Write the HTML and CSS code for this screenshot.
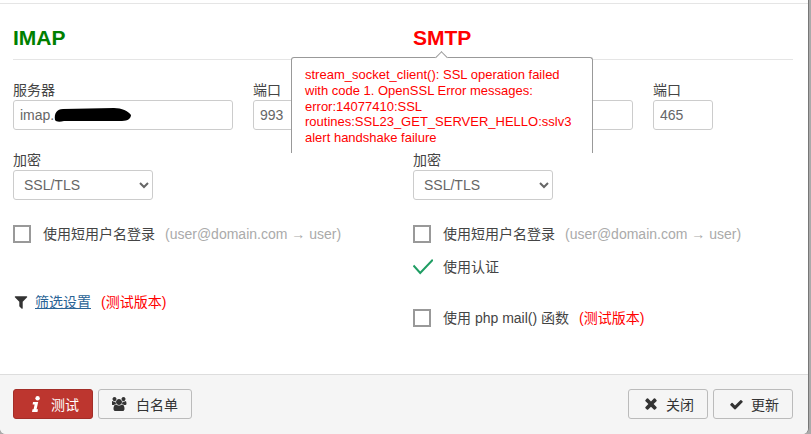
FILE: index.html
```html
<!DOCTYPE html>
<html lang="zh">
<head>
    <meta charset="UTF-8">
    <meta name="viewport" content="width=device-width, initial-scale=1.0">
    <title>邮件设置</title>
    <link rel="stylesheet" href="styles.css">
</head>
<body>
    <div class="modal">
        <div class="modal-body">
            <section class="col">
                <h2 class="legend legend-imap">IMAP</h2>
                <div class="field-row">
                    <div class="field">
                        <label>服务器</label>
                        <div class="redacted">
                            <input class="input-host" type="text" value="imap.">
                            <svg class="scribble" viewBox="0 0 77 14"><path d="M1 12 C0 5 3 1 9 1 L60 0 C68 0 74 3 77 7 C77 10 74 13 68 13 L10 13 C6 14 2 14 1 12 Z"/></svg>
                        </div>
                    </div>
                    <div class="field">
                        <label>端口</label>
                        <input class="input-port" type="text" value="993">
                    </div>
                </div>
                <div class="field">
                    <label>加密</label>
                    <select class="select-enc"><option>SSL/TLS</option></select>
                </div>
                <div class="check-row first-check">
                    <span class="checkbox"></span>
                    <span>使用短用户名登录</span>
                    <span class="hint">(user@domain.com → user)</span>
                </div>
                <div class="filter-row">
                    <svg class="icon-filter" viewBox="0 0 1408 1792"><path d="M1403 295q17 41-14 70l-493 493v742q0 42-39 59-13 5-25 5-27 0-45-19l-256-256q-19-19-19-45v-486l-493-493q-31-29-14-70 17-39 59-39h1280q42 0 59 39z"/></svg>
                    <a href="#">筛选设置</a>
                    <span class="beta">(测试版本)</span>
                </div>
            </section>

            <section class="col">
                <h2 class="legend legend-smtp">SMTP</h2>
                <div class="field-row">
                    <div class="field">
                        <label>&nbsp;</label>
                        <input class="input-host" type="text">
                    </div>
                    <div class="field">
                        <label>端口</label>
                        <input class="input-port" type="text" value="465">
                    </div>
                </div>
                <div class="field">
                    <label>加密</label>
                    <select class="select-enc"><option>SSL/TLS</option></select>
                </div>
                <div class="check-row first-check">
                    <span class="checkbox"></span>
                    <span>使用短用户名登录</span>
                    <span class="hint">(user@domain.com → user)</span>
                </div>
                <div class="check-row auth-row">
                    <svg class="icon-ok" viewBox="0 0 20 16"><path d="M0.5 6.5 L7.2 14 L19.8 0.8"/></svg>
                    <span>使用认证</span>
                </div>
                <div class="check-row mail-row">
                    <span class="checkbox"></span>
                    <span>使用 php mail() 函数</span>
                    <span class="beta">(测试版本)</span>
                </div>
            </section>
        </div>

        <div class="popover">
            <div class="popover-arrow"></div>
            <div class="popover-text">stream_socket_client(): SSL operation failed with code 1. OpenSSL Error messages: error:14077410:SSL routines:SSL23_GET_SERVER_HELLO:sslv3 alert handshake failure</div>
        </div>

        <div class="modal-footer">
            <button class="btn btn-test">
                <svg class="icon-info" viewBox="0 0 8 16"><circle cx="5.6" cy="2.2" r="2.2"/><path d="M1 6 H6.2 L4.6 13.2 H6 L5.5 16 H0 L0.5 13.2 H1.6 L2.6 8.4 H0.6 Z"/></svg>
                测试
            </button>
            <button class="btn btn-white">
                <svg class="icon-users" viewBox="0 0 1920 1792"><path d="M529 896q-162 5-265 128h-134q-82 0-138-40.5t-56-118.5q0-353 124-353 6 0 43.5 21t97.5 42.5 119 21.5q67 0 133-23-5 37-5 66 0 139 81 256zm1071 637q0 120-73 189.5t-194 69.5h-874q-121 0-194-69.5t-73-189.5q0-53 3.5-103.5t14-109 26.5-108.5 43-97.5 62-81 85.5-53.5 111.5-20q10 0 43 21.5t73 48 107 48 135 21.5 135-21.5 107-48 73-48 43-21.5q61 0 111.5 20t85.5 53.5 62 81 43 97.5 26.5 108.5 14 109 3.5 103.5zm-1024-1277q0 106-75 181t-181 75-181-75-75-181 75-181 181-75 181 75 75 181zm704 384q0 159-112.5 271.5t-271.5 112.5-271.5-112.5-112.5-271.5 112.5-271.5 271.5-112.5 271.5 112.5 112.5 271.5zm576 225q0 78-56 118.5t-138 40.5h-134q-103-123-265-128 81-117 81-256 0-29-5-66 66 23 133 23 59 0 119-21.5t97.5-42.5 43.5-21q124 0 124 353zm-128-609q0 106-75 181t-181 75-181-75-75-181 75-181 181-75 181 75 75 181z"/></svg>
                白名单
            </button>
            <button class="btn btn-close">
                <svg class="icon-times" viewBox="100 330 1210 1240"><path d="M1298 1322q0 40-28 68l-136 136q-28 28-68 28t-68-28l-294-294-294 294q-28 28-68 28t-68-28l-136-136q-28-28-28-68t28-68l294-294-294-294q-28-28-28-68t28-68l136-136q28-28 68-28t68 28l294 294 294-294q28-28 68-28t68 28l136 136q28 28 28 68t-28 68l-294 294 294 294q28 28 28 68z"/></svg>
                关闭
            </button>
            <button class="btn btn-update">
                <svg class="icon-check" viewBox="100 300 1600 1200"><path d="M1671 566q0 40-28 68l-724 724-136 136q-28 28-68 28t-68-28l-136-136-362-362q-28-28-28-68t28-68l136-136q28-28 68-28t68 28l294 295 656-657q28-28 68-28t68 28l136 136q28 28 28 68z"/></svg>
                更新
            </button>
        </div>
    </div>
</body>
</html>
```

FILE: styles.css
```css
* {
    box-sizing: border-box;
}

html, body {
    margin: 0;
    height: 100%;
    overflow: hidden;
}

body {
    background-color: #aaa;
    font-family: "Liberation Sans", "Noto Sans CJK SC", sans-serif;
    font-size: 14px;
    line-height: 20px;
    color: #444;
}

.modal {
    position: relative;
    display: flex;
    flex-direction: column;
    width: 809px;
    height: 434px;
    padding-top: 3px;
    background-color: #fff;
    border-right: 1px solid #777;
    border-radius: 0 0 6px 6px;
    overflow: hidden;
}

.modal-body {
    display: flex;
    gap: 20px;
    padding: 0 15px 0 13px;
    border-top: 1px solid #e5e5e5;
}

.col {
    width: 380px;
}

.legend {
    margin: 22px 0 20px;
    padding-bottom: 9px;
    font-size: 21px;
    line-height: 24px;
    font-weight: bold;
    border-bottom: 1px solid #e5e5e5;
}

.legend-imap {
    color: #008000;
}

.legend-smtp {
    color: #f00;
}

.field-row {
    display: flex;
    gap: 20px;
    margin-bottom: 20px;
}

.field label {
    display: block;
}

.redacted {
    position: relative;
}

.scribble {
    position: absolute;
    left: 41px;
    top: 8px;
    width: 77px;
    height: 14px;
}

input, select {
    height: 30px;
    font-family: inherit;
    font-size: 14px;
    color: #666;
    background-color: #fff;
    border: 1px solid #ccc;
    border-radius: 3px;
    padding: 0 6px;
    display: block;
}

.input-host {
    width: 220px;
}

.input-port {
    width: 60px;
}

.select-enc {
    width: 140px;
}

.check-row {
    display: flex;
    align-items: center;
    height: 20px;
}

.first-check {
    margin-top: 24px;
}

.auth-row {
    margin-top: 13px;
}

.mail-row {
    margin-top: 31px;
}

.checkbox {
    width: 18px;
    height: 18px;
    margin-right: 12px;
    border: 2px solid #999;
}

.icon-ok {
    width: 20px;
    height: 16px;
    margin-right: 10px;
    fill: none;
    stroke: #1f9d63;
    stroke-width: 2;
}

.hint {
    margin-left: 10px;
    color: #aaa;
}

.beta {
    margin-left: 10px;
    color: #f00;
}

.filter-row {
    display: flex;
    align-items: center;
    height: 20px;
    margin-top: 48px;
}

.filter-row a {
    color: #2a6496;
}

.icon-filter {
    width: 14px;
    height: 16px;
    margin: 0 7px 0 1px;
    fill: #333;
}

.popover {
    position: absolute;
    left: 291px;
    top: 57px;
    width: 302px;
    height: 96px;
    background-color: #fff;
    border: 1px solid #999;
    border-bottom: none;
    border-radius: 3px 3px 0 0;
}

.popover-arrow {
    position: absolute;
    left: 145px;
    top: -5px;
    width: 9px;
    height: 9px;
    background-color: #fff;
    border-top: 1px solid #999;
    border-left: 1px solid #999;
    transform: rotate(45deg);
}

.popover-text {
    position: relative;
    padding: 9px 13px 0;
    font-size: 13px;
    color: #f00;
    line-height: 15.75px;
}

.modal-footer {
    display: flex;
    gap: 5px;
    margin-top: auto;
    height: 60px;
    padding: 14px 15px 0 13px;
    background-color: #f5f5f5;
    border-top: 1px solid #ddd;
}

.btn {
    display: flex;
    align-items: center;
    height: 30px;
    padding: 0;
    font-family: inherit;
    font-size: 14px;
    color: #333;
    background-color: #f5f5f5;
    border: 1px solid #bbb;
    border-radius: 3px;
}

.btn-test {
    width: 80px;
    padding-left: 18px;
    gap: 11px;
    color: #fff;
    background-color: #bd362f;
    border-color: #a32e28;
}

.btn-white {
    width: 94px;
    padding-left: 13px;
    gap: 9px;
}

.btn-close {
    width: 80px;
    margin-left: auto;
    padding-left: 16px;
    gap: 9px;
}

.btn-update {
    width: 80px;
    padding-left: 16px;
    gap: 8px;
}

.icon-info {
    width: 8px;
    height: 16px;
    fill: #fff;
}

.icon-users {
    width: 15px;
    height: 14px;
    fill: #333;
}

.icon-times {
    width: 12px;
    height: 12px;
    fill: #333;
}

.icon-check {
    width: 13px;
    height: 11px;
    fill: #333;
}
```
